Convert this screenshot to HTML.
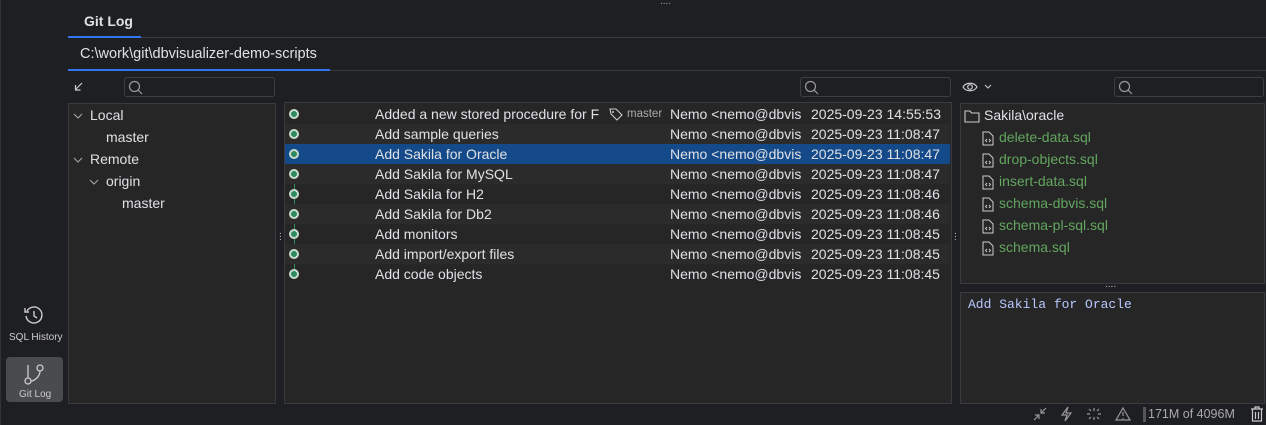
<!DOCTYPE html>
<html><head><style>
*{box-sizing:border-box;margin:0;padding:0}
body{width:1266px;height:425px;background:#1e1f22;font-family:"Liberation Sans",sans-serif;color:#dfe1e5;font-size:13px;position:relative;overflow:hidden}
.a{position:absolute}
.panel{position:absolute;background:#262626;border:1px solid #393b40;overflow:hidden}
.search{position:absolute;background:#1e1f22;border:1px solid #3c3e42;border-radius:3px}
.row{position:absolute;left:0;width:665px;height:20px;line-height:20px;font-size:14px}
.row span{position:absolute;white-space:nowrap}
.dot{position:absolute;left:4px;top:5px;width:10px;height:10px;border:2px solid #c9dcd0;border-radius:50%;background:#2d8a5d}
.f{position:absolute;left:20px;font-size:14px;color:#62a65f;white-space:nowrap}
.t{font-size:14px}
</style></head><body>
<div class="a" style="left:0;top:0;width:1266px;height:425px;border-left:1px solid #333;"></div>
<div class="a" style="left:660px;top:0;color:#aaa;font-size:10px;line-height:4px">....</div>
<div class="a" style="left:84px;top:13px;font-weight:bold;font-size:14px">Git Log</div>
<div class="a" style="left:68px;top:37px;width:1198px;height:1px;background:#393b40"></div>
<div class="a" style="left:68px;top:36px;width:73px;height:2px;background:#3574f0"></div>
<div class="a" style="left:80px;top:46px;font-size:14.5px">C:\work\git\dbvisualizer-demo-scripts</div>
<div class="a" style="left:68px;top:70px;width:1198px;height:1px;background:#393b40"></div>
<div class="a" style="left:68px;top:69px;width:262px;height:2px;background:#3574f0"></div>
<svg class="a" style="left:73px;top:81px" width="12" height="12" viewBox="0 0 12 12"><path d="M9 2L2.5 8.5M2.5 4v5h5" stroke="#ccc" stroke-width="1.2" fill="none"/></svg>
<div class="search" style="left:124px;top:77px;width:151px;height:20px"><svg class="a" style="left:3px;top:2px" width="15" height="15"><circle cx="6.5" cy="6.5" r="5" stroke="#999" fill="none" stroke-width="1.2"/><path d="M10 10l4 4" stroke="#999" stroke-width="1.2"/></svg></div>
<div class="search" style="left:800px;top:77px;width:151px;height:20px"><svg class="a" style="left:3px;top:2px" width="15" height="15"><circle cx="6.5" cy="6.5" r="5" stroke="#999" fill="none" stroke-width="1.2"/><path d="M10 10l4 4" stroke="#999" stroke-width="1.2"/></svg></div>
<div class="search" style="left:1114px;top:77px;width:150px;height:20px"><svg class="a" style="left:3px;top:2px" width="15" height="15"><circle cx="6.5" cy="6.5" r="5" stroke="#999" fill="none" stroke-width="1.2"/><path d="M10 10l4 4" stroke="#999" stroke-width="1.2"/></svg></div>
<svg class="a" style="left:962px;top:80px" width="32" height="14"><path d="M1 7C4 2 12 2 15 7C12 12 4 12 1 7Z" stroke="#ccc" fill="none" stroke-width="1.2"/><circle cx="8" cy="7" r="2.3" stroke="#ccc" fill="none" stroke-width="1.2"/><path d="M23 5l3 3 3-3" stroke="#ccc" fill="none"/></svg>

<div class="panel" style="left:68px;top:103px;width:208px;height:301px">
<svg class="a" style="left:4px;top:8px" width="10" height="8"><path d="M1 2l4 4 4-4" stroke="#aaa" fill="none"/></svg>
<div class="a t" style="left:21px;top:3px">Local</div>
<div class="a t" style="left:37px;top:25px">master</div>
<svg class="a" style="left:4px;top:52px" width="10" height="8"><path d="M1 2l4 4 4-4" stroke="#aaa" fill="none"/></svg>
<div class="a t" style="left:21px;top:47px">Remote</div>
<svg class="a" style="left:20px;top:74px" width="10" height="8"><path d="M1 2l4 4 4-4" stroke="#aaa" fill="none"/></svg>
<div class="a t" style="left:37px;top:69px">origin</div>
<div class="a t" style="left:53px;top:91px">master</div>
</div>
<div class="a" style="left:279px;top:230px;color:#bbb;font-size:10px;line-height:3px">.<br>.<br>.</div>
<div class="a" style="left:954px;top:230px;color:#bbb;font-size:10px;line-height:3px">.<br>.<br>.</div>

<div class="panel" style="left:284px;top:102px;width:668px;height:302px">
<div class="a" style="left:9px;top:12px;width:1px;height:160px;background:#2d8a5d"></div>
<div class="row" style="top:1px;background:#262626"><div class="dot"></div><span style="left:90px">Added a new stored procedure for F</span><svg class="a" style="left:324px;top:4px" width="14" height="13"><path d="M1 1h6l6 6-5 5-6-6Z" stroke="#ccc" fill="none" stroke-width="1.1"/><circle cx="4" cy="4" r="1" fill="#ccc"/></svg><span style="left:342px;font-size:11.5px;color:#aaa">master</span><span style="left:385px;width:134px;overflow:hidden">Nemo &lt;nemo@dbvis</span><span style="left:526px">2025-09-23 14:55:53</span></div>
<div class="row" style="top:21px;background:#2b2b2b"><div class="dot"></div><span style="left:90px">Add sample queries</span><span style="left:385px;width:134px;overflow:hidden">Nemo &lt;nemo@dbvis</span><span style="left:526px">2025-09-23 11:08:47</span></div>
<div class="row" style="top:41px;background:#154a8a"><div class="dot"></div><span style="left:90px">Add Sakila for Oracle</span><span style="left:385px;width:134px;overflow:hidden">Nemo &lt;nemo@dbvis</span><span style="left:526px">2025-09-23 11:08:47</span></div>
<div class="row" style="top:61px;background:#2b2b2b"><div class="dot"></div><span style="left:90px">Add Sakila for MySQL</span><span style="left:385px;width:134px;overflow:hidden">Nemo &lt;nemo@dbvis</span><span style="left:526px">2025-09-23 11:08:47</span></div>
<div class="row" style="top:81px"><div class="dot"></div><span style="left:90px">Add Sakila for H2</span><span style="left:385px;width:134px;overflow:hidden">Nemo &lt;nemo@dbvis</span><span style="left:526px">2025-09-23 11:08:46</span></div>
<div class="row" style="top:101px;background:#2b2b2b"><div class="dot"></div><span style="left:90px">Add Sakila for Db2</span><span style="left:385px;width:134px;overflow:hidden">Nemo &lt;nemo@dbvis</span><span style="left:526px">2025-09-23 11:08:46</span></div>
<div class="row" style="top:121px"><div class="dot"></div><span style="left:90px">Add monitors</span><span style="left:385px;width:134px;overflow:hidden">Nemo &lt;nemo@dbvis</span><span style="left:526px">2025-09-23 11:08:45</span></div>
<div class="row" style="top:141px;background:#2b2b2b"><div class="dot"></div><span style="left:90px">Add import/export files</span><span style="left:385px;width:134px;overflow:hidden">Nemo &lt;nemo@dbvis</span><span style="left:526px">2025-09-23 11:08:45</span></div>
<div class="row" style="top:161px"><div class="dot"></div><span style="left:90px">Add code objects</span><span style="left:385px;width:134px;overflow:hidden">Nemo &lt;nemo@dbvis</span><span style="left:526px">2025-09-23 11:08:45</span></div>
</div>

<div class="panel" style="left:960px;top:103px;width:305px;height:181px">
<svg class="a" style="left:3px;top:6px" width="16" height="13"><path d="M1 1h5l1.5 2H15v9H1Z" stroke="#ccc" fill="none" stroke-width="1.1"/></svg>
<div class="a t" style="left:23px;top:3px">Sakila\oracle</div>
<svg class="a" style="left:21px;top:27px" width="12" height="15" ><path d="M1 1h6l4 4v9H1Z" stroke="#ccc" fill="none"/><path d="M5 8l-1.5 1.5L5 11M7 8l1.5 1.5L7 11" stroke="#ccc" fill="none" stroke-width=".9"/></svg>
<div class="f" style="left:38px;top:25px">delete-data.sql</div>
<svg class="a" style="left:21px;top:49px" width="12" height="15" ><path d="M1 1h6l4 4v9H1Z" stroke="#ccc" fill="none"/><path d="M5 8l-1.5 1.5L5 11M7 8l1.5 1.5L7 11" stroke="#ccc" fill="none" stroke-width=".9"/></svg>
<div class="f" style="left:38px;top:47px">drop-objects.sql</div>
<svg class="a" style="left:21px;top:71px" width="12" height="15" ><path d="M1 1h6l4 4v9H1Z" stroke="#ccc" fill="none"/><path d="M5 8l-1.5 1.5L5 11M7 8l1.5 1.5L7 11" stroke="#ccc" fill="none" stroke-width=".9"/></svg>
<div class="f" style="left:38px;top:69px">insert-data.sql</div>
<svg class="a" style="left:21px;top:93px" width="12" height="15" ><path d="M1 1h6l4 4v9H1Z" stroke="#ccc" fill="none"/><path d="M5 8l-1.5 1.5L5 11M7 8l1.5 1.5L7 11" stroke="#ccc" fill="none" stroke-width=".9"/></svg>
<div class="f" style="left:38px;top:91px">schema-dbvis.sql</div>
<svg class="a" style="left:21px;top:115px" width="12" height="15" ><path d="M1 1h6l4 4v9H1Z" stroke="#ccc" fill="none"/><path d="M5 8l-1.5 1.5L5 11M7 8l1.5 1.5L7 11" stroke="#ccc" fill="none" stroke-width=".9"/></svg>
<div class="f" style="left:38px;top:113px">schema-pl-sql.sql</div>
<svg class="a" style="left:21px;top:137px" width="12" height="15" ><path d="M1 1h6l4 4v9H1Z" stroke="#ccc" fill="none"/><path d="M5 8l-1.5 1.5L5 11M7 8l1.5 1.5L7 11" stroke="#ccc" fill="none" stroke-width=".9"/></svg>
<div class="f" style="left:38px;top:135px">schema.sql</div>
</div>
<div class="a" style="left:1105px;top:283px;color:#bbb;font-size:10px;line-height:4px">....</div>
<div class="panel" style="left:960px;top:292px;width:305px;height:112px">
<div class="a" style="left:7px;top:4px;font-family:'Liberation Mono',monospace;font-size:13px;color:#b9c8ff">Add Sakila for Oracle</div>
</div>

<svg class="a" style="left:23px;top:305px" width="22" height="22"><path d="M4 6A8 8 0 1 1 3 11" stroke="#ccc" fill="none" stroke-width="1.4"/><path d="M2 3v4h4" stroke="#ccc" fill="none" stroke-width="1.4"/><path d="M11 6v5l3 2" stroke="#ccc" fill="none" stroke-width="1.4"/></svg>
<div class="a" style="left:9px;top:332px;font-size:10px;color:#ccc">SQL History</div>
<div class="a" style="left:6px;top:357px;width:57px;height:45px;background:#4a4b4f;border-radius:4px"></div>
<svg class="a" style="left:22px;top:362px" width="24" height="24"><circle cx="6" cy="19" r="3" stroke="#ccc" fill="none" stroke-width="1.3"/><circle cx="18" cy="6" r="3" stroke="#ccc" fill="none" stroke-width="1.3"/><path d="M6 3v13M18 9c0 6-6 10-9 10" stroke="#ccc" fill="none" stroke-width="1.3"/></svg>
<div class="a" style="left:19px;top:389px;font-size:10px;color:#ccc">Git Log</div>

<svg class="a" style="left:1032px;top:406px" width="100" height="16"><g stroke="#999" fill="none" stroke-width="1.2"><path d="M2 14l5-5M3 9h4v4M14 2l-5 5M9 3v4h4"/><path d="M36 1l-6 8h5l-2 6 6-8h-5z"/><path d="M62 2v3M62 11v3M55 8h3M66 8h3M57 3l2 2M65 11l2 2M57 13l2-2M65 5l2-2"/><path d="M91 2l7 12H84z M91 6v4M91 12v1"/></g></svg>
<div class="a" style="left:1143px;top:407px;width:3px;height:15px;background:#555"></div>
<div class="a" style="left:1148px;top:407px;font-size:12.5px;color:#aaa">171M of 4096M</div>
<svg class="a" style="left:1250px;top:406px" width="14" height="16"><path d="M1 3h12M5 3V1h4v2M2.5 3v12h9V3M5.5 6v7M8.5 6v7" stroke="#ccc" fill="none" stroke-width="1.2"/></svg>
</body></html>
